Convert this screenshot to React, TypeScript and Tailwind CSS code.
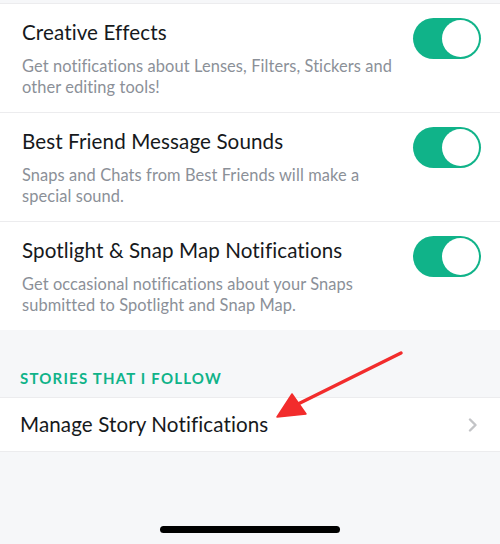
import React from "react";

const rows = [
  {
    title: "Creative Effects",
    desc: ["Get notifications about Lenses, Filters, Stickers and", "other editing tools!"],
  },
  {
    title: "Best Friend Message Sounds",
    desc: ["Snaps and Chats from Best Friends will make a", "special sound."],
  },
  {
    title: "Spotlight & Snap Map Notifications",
    desc: ["Get occasional notifications about your Snaps", "submitted to Spotlight and Snap Map."],
  },
];

function Toggle() {
  return (
    <div className="flex h-[41px] w-[68px] shrink-0 items-center justify-end rounded-full bg-[#10b389] p-[2px]">
      <div className="h-[37px] w-[37px] rounded-full bg-white" />
    </div>
  );
}

export default function App() {
  return (
    <div
      className="relative flex h-[544px] w-[500px] flex-col overflow-hidden bg-[#f6f7f9]"
      style={{ fontFamily: "Lato, 'Open Sans', sans-serif" }}
    >
      <div className="mt-[3px] border-t border-[#ececee] bg-white">
        {rows.map((row, i) => (
          <div
            key={row.title}
            className={
              "flex items-start justify-between pl-[22px] pr-[19px] pt-[14px] pb-[15px] " +
              (i < rows.length - 1 ? "border-b border-[#ececee]" : "")
            }
          >
            <div>
              <div className="text-[20.6px] leading-[28px] tracking-[0.1px] text-[#16191c]">{row.title}</div>
              <div className="mt-[9px] text-[16.4px] leading-[21px] tracking-[0.1px] text-[#8b9098]">
                {row.desc.map((line) => (
                  <div key={line}>{line}</div>
                ))}
              </div>
            </div>
            <Toggle />
          </div>
        ))}
      </div>

      {/* section header */}
      <div className="border-b border-[#ececee] px-[20px] pt-[40px] pb-[11px]">
        <div className="text-[15px] font-bold leading-[16px] tracking-[1.2px] text-[#10b389]">
          STORIES THAT I FOLLOW
        </div>
      </div>

      <div className="flex h-[54px] items-center justify-between border-b border-[#ececee] bg-white pl-[20px] pr-[22px]">
        <div className="text-[20.6px] tracking-[0.1px] text-[#16191c]">Manage Story Notifications</div>
        <svg width="10" height="14" viewBox="0 0 10 14" fill="none">
          <path d="M2 1.5 L7.5 7 L2 12.5" stroke="#c3c4c7" strokeWidth="2.4" strokeLinecap="round" strokeLinejoin="round" />
        </svg>
      </div>

      <div className="flex flex-1 items-end justify-center pb-[11px]">
        <div className="h-[7px] w-[180px] rounded-full bg-black" />
      </div>

      {/* red annotation arrow */}
      <svg className="absolute left-0 top-0" width="500" height="544" viewBox="0 0 500 544">
        <line x1="401" y1="353" x2="296" y2="405" stroke="#f22c2c" strokeWidth="3.5" strokeLinecap="round" />
        <polygon points="277,417 292,394 306,414" fill="#f22c2c" stroke="#f22c2c" strokeWidth="1.5" strokeLinejoin="round" />
      </svg>
    </div>
  );
}
